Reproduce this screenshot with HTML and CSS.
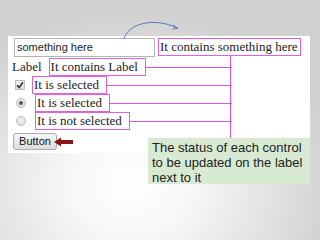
FILE: index.html
```html
<!DOCTYPE html>
<html>
<head>
<meta charset="utf-8">
<link rel="stylesheet" href="styles.css">
</head>
<body>
<div class="slide">
  <div class="panel">
    <div class="row row-first">
      <div class="textbox">something here</div>
      <div class="lbl lbl-right">It contains something here</div>
    </div>
    <div class="rows">
      <div class="row">
        <span class="plain">Label</span>
        <span class="lbl">It contains Label</span>
        <span class="wire"></span>
      </div>
      <div class="row">
        <span class="check"><svg width="8" height="8" viewBox="0 0 8 8"><path d="M1 4.2 L3.2 6.4 L7 1.2" fill="none" stroke="#333" stroke-width="1.6"/></svg></span>
        <span class="lbl">It is selected</span>
        <span class="wire"></span>
      </div>
      <div class="row">
        <span class="radio on"></span>
        <span class="lbl">It is selected</span>
        <span class="wire"></span>
      </div>
      <div class="row">
        <span class="radio"></span>
        <span class="lbl">It is not selected</span>
        <span class="wire"></span>
      </div>
      <div class="row row-btn">
        <span class="btn">Button</span>
        <svg class="red-arrow" width="20" height="10" viewBox="0 0 20 10"><path d="M0 5 L7 0.5 L7 3 L19 3 L19 7 L7 7 L7 9.5 Z" fill="#8e1414"/></svg>
      </div>
    </div>
    <div class="trunk"></div>
  </div>
  <svg class="curve" width="70" height="30" viewBox="0 0 70 30"><path d="M9 24 C 13 8, 40 2, 62 13" fill="none" stroke="#5a7ab8" stroke-width="1"/><path d="M58 10 L63 13.5 L57.5 14" fill="none" stroke="#5a7ab8" stroke-width="1"/></svg>
  <div class="note">The status of each control to be updated on the label next to it</div>
</div>
</body>
</html>
```
FILE: styles.css
```css
html, body {
  margin: 0;
  padding: 0;
}
.slide {
  position: relative;
  width: 320px;
  height: 240px;
  overflow: hidden;
  background: radial-gradient(ellipse 210px 175px at 130px 185px, #ffffff 0%, #f7f7f7 30%, #d0d0d0 100%);
  font-family: "Liberation Serif", serif;
  color: #222;
}
.panel {
  position: relative;
  margin: 0 0 0 8px;
  top: 36px;
  width: 302px;
  height: 117px;
  background: #fff;
  box-sizing: border-box;
  padding: 2px 0 0 4px;
}
.row {
  display: flex;
  align-items: center;
  height: 18px;
}
.row-first {
  height: 20px;
  align-items: flex-start;
}
.rows {
  width: 220px;
}
.row-btn {
  height: 21px;
  padding-top: 1px;
  box-sizing: border-box;
}
.textbox {
  margin-left: 2px;
  width: 141px;
  height: 19px;
  box-sizing: border-box;
  border: 1px solid #b4b4b4;
  font-family: "Liberation Sans", Arial, sans-serif;
  font-size: 11px;
  line-height: 17px;
  padding: 0 2px;
  color: #222;
}
.lbl {
  border: 1px solid #e060e0;
  background: #fff;
  font-size: 13px;
  line-height: 16px;
  padding: 0 7px 0 1px;
  white-space: nowrap;
  color: #222;
}
.lbl-right {
  margin-left: 3px;
  padding: 0 2px 0 1px;
  line-height: 16px;
}
.plain {
  font-size: 13px;
  margin-right: 7px;
}
.wire {
  flex: 1;
  align-self: flex-start;
  margin-top: 9px;
  height: 1px;
  background: #e050e0;
}
.check {
  width: 10px;
  height: 10px;
  box-sizing: border-box;
  margin: 0 7px 0 3px;
  border: 1px solid #b8b8b8;
  border-radius: 1px;
  background: linear-gradient(#f4f4f4, #dcdcdc);
  display: flex;
  align-items: center;
  justify-content: center;
}
.radio {
  width: 10px;
  height: 10px;
  box-sizing: border-box;
  margin: 0 9px 0 4px;
  border: 1px solid #bdbdbd;
  border-radius: 50%;
  background: radial-gradient(circle at 50% 40%, #f4f4f4, #d6d6d6);
  position: relative;
}
.radio.on::after {
  content: "";
  position: absolute;
  left: 2px;
  top: 2px;
  width: 4px;
  height: 4px;
  border-radius: 50%;
  background: #555;
}
.btn {
  margin-left: 1px;
  width: 44px;
  height: 17px;
  box-sizing: border-box;
  border: 1px solid #acacac;
  border-radius: 3px;
  background: linear-gradient(#f6f6f6, #dddddd);
  font-family: "Liberation Sans", Arial, sans-serif;
  font-size: 11px;
  line-height: 15px;
  text-align: center;
  color: #111;
}
.red-arrow {
  margin-left: -3px;
  margin-top: 1px;
}
.trunk {
  position: absolute;
  left: 222px;
  top: 20px;
  width: 1px;
  height: 82px;
  background: #e050e0;
}
.curve {
  position: absolute;
  left: 115px;
  top: 15px;
}
.note {
  position: absolute;
  left: 148px;
  top: 138px;
  width: 162px;
  height: 46px;
  box-sizing: border-box;
  padding: 2px 4px;
  background: #d9ead3;
  font-family: "Liberation Sans", Arial, sans-serif;
  font-size: 13px;
  line-height: 15px;
  color: #222;
}
```
